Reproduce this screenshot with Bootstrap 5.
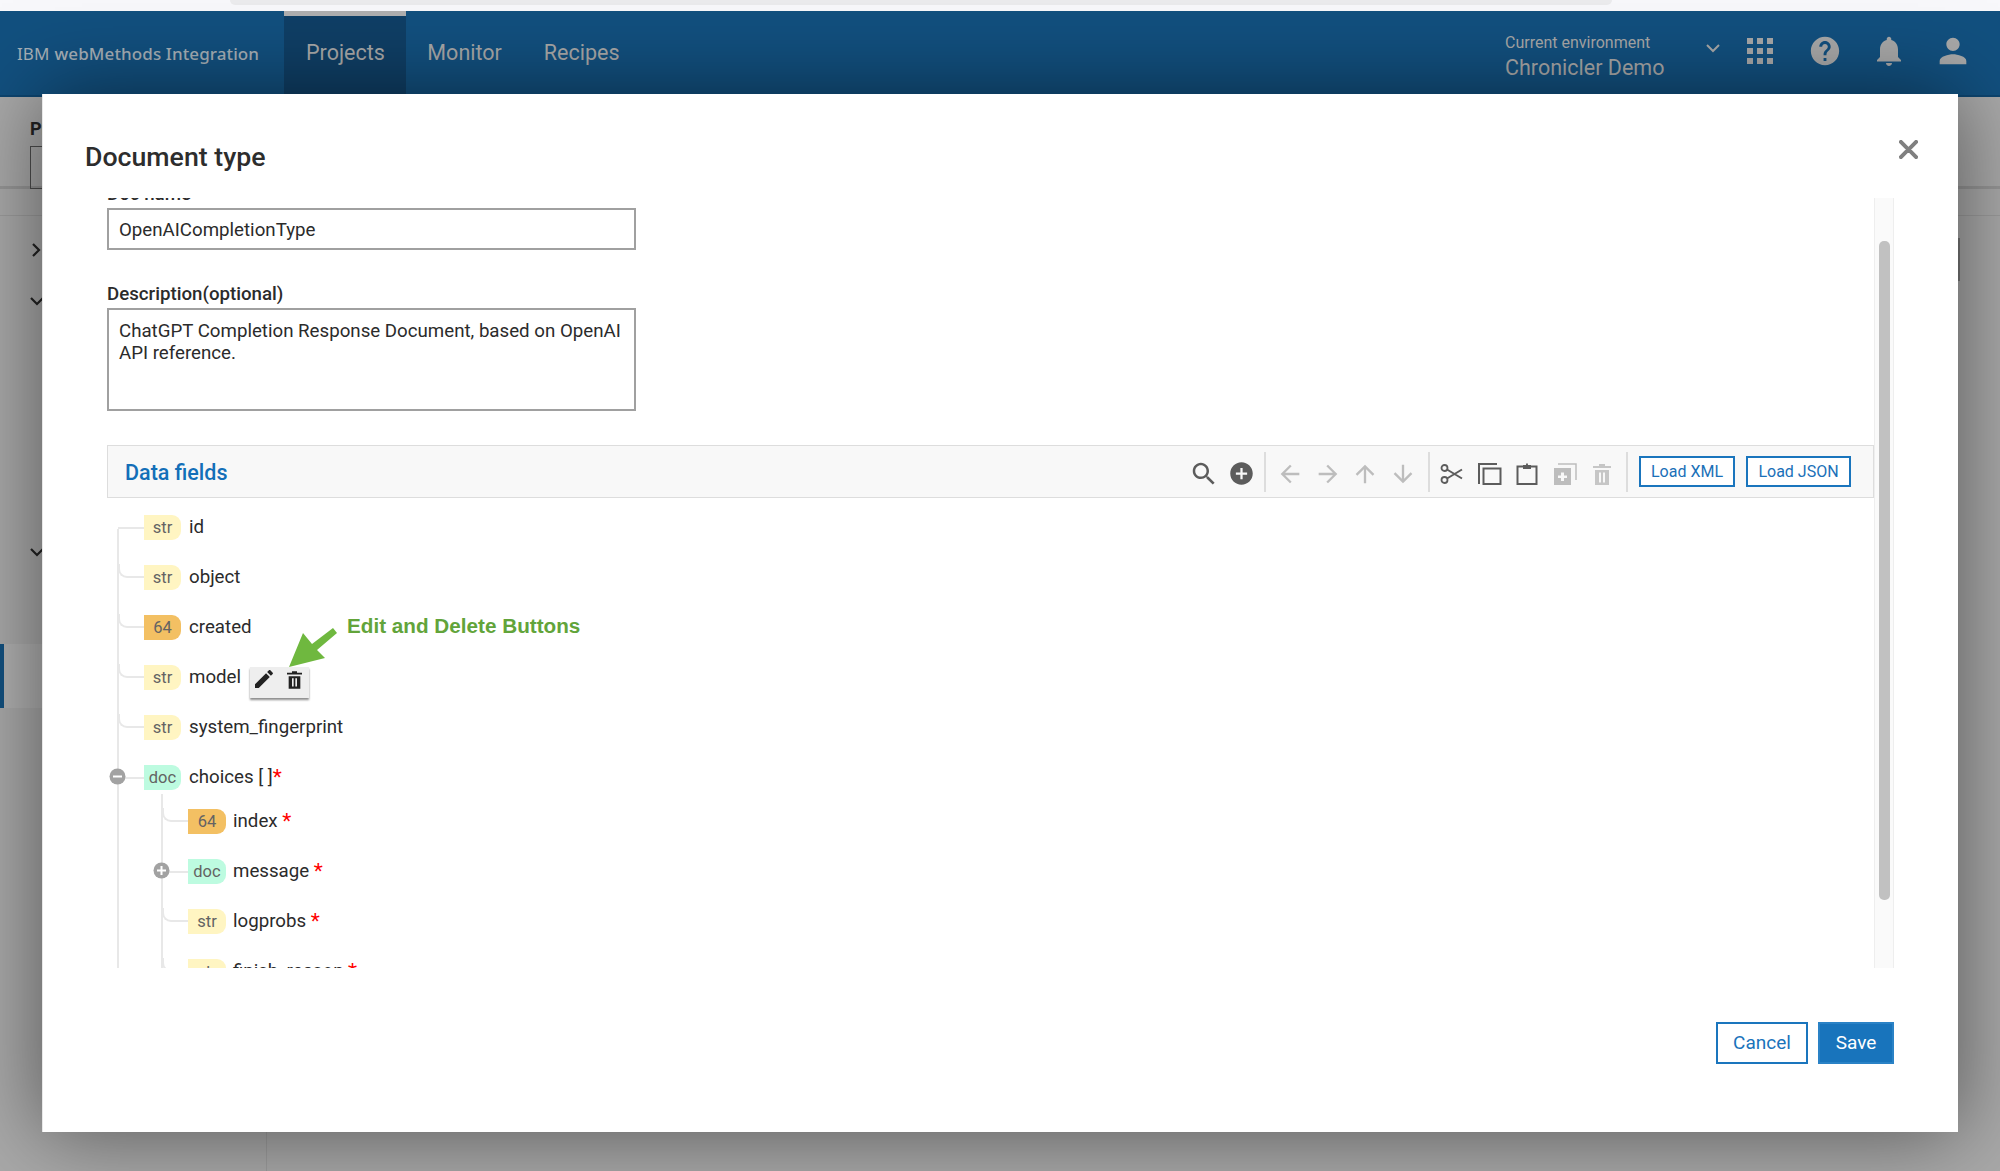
<!DOCTYPE html>
<html lang="en"><head><meta charset="utf-8"><title>Document type</title>
<link rel="stylesheet" href="https://cdn.jsdelivr.net/npm/bootstrap@5.3.0/dist/css/bootstrap.min.css">
<style>
html,body{height:1171px;overflow:hidden}
body{position:relative;background:#a9a9a9;font-family:Roboto,"Liberation Sans",sans-serif;color:#2b2b2b}
.strip{height:11px;background:#f8f8fb;padding-left:230px;padding-right:388px}
.strip-addr{height:5px;background:#ebebed;border-radius:0 0 6px 6px}
.ibm-bar{height:86px;background:#12507f;border-bottom:2px solid #0d4570;color:#a9a9a9;align-items:stretch;flex-wrap:nowrap}
.brand-txt{font-family:"Noto Sans",sans-serif;font-size:17px;color:#a7b0b8;padding-left:17px;padding-top:2px;width:284px;display:flex;align-items:center;white-space:nowrap;letter-spacing:.1px}
.brand-txt b{font-weight:500;margin-left:5px}
.tab-lnk{color:#a9a9a9;font-size:21.5px;padding:0 21px;height:100%;display:flex;align-items:center;border-top:5px solid transparent;padding-bottom:5px;text-decoration:none}
.tab-lnk.on{background:#0f3f66;border-top-color:#b0b0b0;padding-left:22px;padding-right:21.5px}
.env-box{margin-left:auto;display:flex;align-items:center;color:#a9a9a9;padding-right:31px;padding-bottom:2px}
.env-small{font-size:16px;line-height:20px}
.env-big{font-size:21.5px;line-height:29px}
.env-txt{width:201px;margin-top:11px}
.nav-ic{fill:#a9a9a9;display:block}
.pg-head{height:92px;padding:21px 0 0 30px;border-bottom:3px solid #969696;background:#a9a9a9;font-weight:700;font-size:18px;line-height:22px;color:#222}
.pg-inp{width:200px;height:43px;border:1px solid #4d4d4d;margin-top:6px}
.pg-sub{height:27px;border-bottom:1px solid #9b9b9b}
.pg-side{width:267px;height:955px;border-right:1px solid #9c9c9c;padding-top:27px}
.side-chev{display:block;margin-left:30px;stroke:#222;fill:none;stroke-width:2.2}
.side-act{height:64px;margin-top:86px;border-left:4px solid #12507f;background:#b0b0b0}
.edge-mark{position:absolute;left:1958px;top:238px;width:2px;height:43px;background:#777}
.doc-modal{position:absolute;left:42px;top:94px;width:1916px;height:1038px;border:0;border-left:1px solid #e8e8e8;border-radius:0;box-shadow:0 0 80px rgba(0,0,0,.5);background:#fff}
.doc-head{height:104px;padding:0 0 0 42px;border:0;align-items:flex-start}
.doc-title{font-size:26.7px;font-weight:500;line-height:34px;margin-top:46px;color:#2d2d2d}
.doc-x{position:absolute;left:1856px;top:46px;width:19px;height:19px;fill:#808080;stroke:#808080;stroke-width:.9}
.doc-body{height:770px;padding:0;margin:0 64px 0 42px;flex:none;display:flex;overflow:hidden}
.doc-form{flex:1;min-width:0;padding-left:22px}
.doc-track{width:20px;flex:none;background:#fafafa;border:1px solid #eee;border-width:0 1px;padding:43px 3px 0 4px}
.doc-thumb{height:659px;width:11px;background:#c1c1c1;border-radius:5px}
.fld-lbl{font-weight:500;font-size:18.7px;line-height:22px;margin:0 0 3px;display:block;color:#2b2b2b}
.fld-lbl.clip{margin:-15px 0 3px}
.fld-ctl{width:529px;border:2px solid #a0a0a0;border-radius:0;font-size:18.7px;line-height:22px;padding:9px 10px 7px;color:#2b2b2b;height:42px;margin-bottom:33px;background:#fff}
textarea.fld-ctl{height:103px;padding:10px 10px 4px;margin-bottom:34px;resize:none;min-height:0;display:block;overflow:hidden}
.df-bar{height:53px;background:#f8f8f8;border:1px solid #ddd;display:flex;align-items:center;padding:0 22px 0 17px}
.df-title{font-size:21.5px;font-weight:500;color:#136fb8;margin-right:auto;margin-top:4px}
.tb-i{width:37.5px;height:32px;display:flex;align-items:center;justify-content:center;flex:none;margin-top:4px}
.tb-i svg{display:block}
.dk{fill:#5c5c5c}.lt{fill:#bdbdbd}
.tb-sep{width:2px;height:40px;background:#ddd;margin:0 6px;flex:none}
.tb-sep.a{margin-left:3px}
.tb-sep.b{margin-right:4px}
.load-btn{height:31px;border:2px solid #1a75bd;border-radius:0;background:#fff;color:#1a70b8;font-size:16px;line-height:27px;padding:0;width:96px;flex:none}
.load-btn.j{width:105px;margin-left:11px}
.load-sep-gap{margin-left:5px;margin-right:11px}
.tree-ul{list-style:none;margin:0;padding:4px 0 0 37px;position:relative}
.tree-ul::before{content:"";position:absolute;left:10px;top:31px;bottom:0;width:2px;background:#e8e8e8}
.tree-ul.sub{padding:0;margin:-6px 0 0 44px}
.tree-ul.sub::before{left:-27px;top:-2px}
.nd{height:50px;display:flex;align-items:center;position:relative;font-size:18.7px;white-space:nowrap;padding-top:1px}
.nd::before{content:"";position:absolute;left:-26px;top:12px;height:14px;width:26px;border-left:2px solid #e8e8e8;border-bottom:2px solid #e8e8e8;border-bottom-left-radius:9px}
.nd.first::before{top:25px;height:2px;border-left:0;border-radius:0}
.nd.open::before{border-left:0;border-radius:0;top:25px;height:2px}
.ty{width:37px;height:25px;line-height:26px;border-radius:0 9px 9px 0;text-align:center;font-size:16.5px;color:#636363;margin-right:8px;flex:none}
.sub .ty{width:38px;margin-right:7px}
.ty-s{background:#fff5c2}.ty-n{background:#f3c063}.ty-d{background:#bdfbe0}
.req{color:#f00;font-size:21px;line-height:1}
.tog{position:absolute;left:-35px;top:16px;z-index:1;display:block}
.hover-tools{background:#eee;height:31px;width:59px;margin:9px 0 0 9px;box-shadow:0 2px 2px rgba(0,0,0,.45);display:flex;align-items:center;justify-content:space-between;padding:0 7px 6px 4px}
.note-arrow{position:absolute;left:280px;top:620px;z-index:2}
.note-txt{position:absolute;left:347px;top:614px;z-index:2;font-family:"Liberation Sans",sans-serif;font-weight:700;font-size:20.7px;line-height:24px;color:#62a43a;white-space:nowrap}
.doc-foot{border:0;padding:54px 64px 0 0;justify-content:flex-end;gap:10px;align-items:flex-start;flex:1}
.act{height:42px;border-radius:0;margin:0;padding:0;font-size:19px;border:2px solid #1a75bd}
.act-c{width:92px;color:#1a73bb;background:#fff}
.act-s{width:76px;color:#fff;background:#1874bc;border-color:#2a82c6}
</style></head>
<body>
<div class="strip"><div class="strip-addr"></div></div>
<nav class="navbar ibm-bar p-0">
  <div class="brand-txt">IBM<b>webMethods Integration</b></div>
  <a class="tab-lnk on" href="#">Projects</a><a class="tab-lnk" href="#">Monitor</a><a class="tab-lnk" href="#">Recipes</a>
  <div class="env-box">
    <div class="env-txt"><div class="env-small">Current environment</div><div class="env-big">Chronicler Demo</div></div>
    <svg width="14" height="9" viewBox="0 0 14 9" style="margin-right:27px;margin-top:-8px"><path d="M1 1l6 6 6-6" fill="none" stroke="#a9a9a9" stroke-width="2"/></svg>
    <svg class="nav-ic" width="26" height="26" viewBox="0 0 26 26" style="margin-right:35px;margin-top:-2px"><path d="M0 0h6v6H0zM10 0h6v6h-6zM20 0h6v6h-6zM0 10h6v6H0zM10 10h6v6h-6zM20 10h6v6h-6zM0 20h6v6H0zM10 20h6v6h-6zM20 20h6v6h-6z"/></svg>
    <svg class="nav-ic" width="34" height="34" viewBox="0 0 24 24" style="margin-right:29px;margin-top:-2px"><path d="M12 2C6.48 2 2 6.48 2 12s4.48 10 10 10 10-4.48 10-10S17.52 2 12 2zm1 17h-2v-2h2v2zm2.07-7.75l-.9.92C13.45 12.9 13 13.5 13 15h-2v-.5c0-1.1.45-2.1 1.17-2.83l1.24-1.26c.37-.36.59-.86.59-1.41 0-1.1-.9-2-2-2s-2 .9-2 2H8c0-2.21 1.79-4 4-4s4 1.79 4 4c0 .88-.36 1.68-.93 2.25z"/></svg>
    <svg class="nav-ic" width="36" height="36" viewBox="0 0 24 24" style="margin-right:26px;margin-top:-2px"><path d="M12 22c1.1 0 2-.9 2-2h-4c0 1.1.89 2 2 2zm6-6v-5c0-3.07-1.64-5.64-4.5-6.32V4c0-.83-.67-1.5-1.5-1.5s-1.5.67-1.5 1.5v.68C7.63 5.36 6 7.92 6 11v5l-2 2v1h16v-1l-2-2z"/></svg>
    <svg class="nav-ic" width="40" height="40" viewBox="0 0 24 24" style="margin-right:-4px;margin-top:-2px"><path d="M12 12c2.21 0 4-1.79 4-4s-1.79-4-4-4-4 1.79-4 4 1.79 4 4 4zm0 2c-2.67 0-8 1.34-8 4v2h16v-2c0-2.66-5.33-4-8-4z"/></svg>
  </div>
</nav>
<div class="pg-head">Project<div class="pg-inp"></div></div>
<div class="pg-sub"></div>
<div class="pg-side">
  <svg class="side-chev" width="12" height="14" viewBox="0 0 12 14"><path d="M3 1l6 6-6 6"/></svg>
  <svg class="side-chev" style="margin-top:40px" width="14" height="10" viewBox="0 0 14 10"><path d="M1 1l6 6 6-6"/></svg>
  <svg class="side-chev" style="margin-top:241px" width="14" height="10" viewBox="0 0 14 10"><path d="M1 1l6 6 6-6"/></svg>
  <div class="side-act"></div>
</div>
<div class="edge-mark"></div>

<div class="modal-content doc-modal">
  <div class="modal-header doc-head"><h5 class="modal-title doc-title">Document type</h5>
    <svg class="doc-x" viewBox="5 5 14 14"><path d="M19 6.41L17.59 5 12 10.59 6.41 5 5 6.41 10.59 12 5 17.59 6.41 19 12 13.41 17.59 19 19 17.59 13.41 12z"/></svg>
  </div>
  <div class="modal-body doc-body">
    <div class="doc-form">
      <label class="fld-lbl clip">Doc name</label>
      <input class="form-control fld-ctl" value="OpenAICompletionType">
      <label class="fld-lbl">Description(optional)</label>
      <textarea class="form-control fld-ctl" rows="3">ChatGPT Completion Response Document, based on OpenAI API reference.</textarea>
      <div class="df-bar">
        <span class="df-title">Data fields</span>
        <span class="tb-i"><svg class="dk" width="30" height="30" viewBox="0 0 24 24"><path d="M15.5 14h-.79l-.28-.27C15.41 12.59 16 11.11 16 9.5 16 5.91 13.09 3 9.5 3S3 5.91 3 9.5 5.91 16 9.5 16c1.61 0 3.09-.59 4.23-1.57l.27.28v.79l5 4.99L20.49 19l-4.99-5zm-6 0C7.01 14 5 11.99 5 9.5S7.01 5 9.5 5 14 7.01 14 9.5 11.99 14 9.5 14z"/></svg></span>
        <span class="tb-i"><svg class="dk" width="27" height="27" viewBox="0 0 24 24"><path d="M12 2C6.48 2 2 6.48 2 12s4.48 10 10 10 10-4.48 10-10S17.52 2 12 2zm5 11h-4v4h-2v-4H7v-2h4V7h2v4h4v2z"/></svg></span>
        <span class="tb-sep a"></span>
        <span class="tb-i"><svg class="lt" width="28" height="28" viewBox="0 0 24 24"><path d="M20 11H7.83l5.59-5.59L12 4l-8 8 8 8 1.41-1.41L7.83 13H20v-2z"/></svg></span>
        <span class="tb-i"><svg class="lt" width="28" height="28" viewBox="0 0 24 24"><path d="M12 4l-1.41 1.41L16.17 11H4v2h12.17l-5.58 5.59L12 20l8-8z"/></svg></span>
        <span class="tb-i"><svg class="lt" width="28" height="28" viewBox="0 0 24 24"><path d="M4 12l1.41 1.41L11 7.83V20h2V7.83l5.58 5.59L20 12l-8-8-8 8z"/></svg></span>
        <span class="tb-i"><svg class="lt" width="28" height="28" viewBox="0 0 24 24"><path d="M20 12l-1.41-1.41L13 16.17V4h-2v12.17l-5.58-5.59L4 12l8 8 8-8z"/></svg></span>
        <span class="tb-sep b"></span>
        <span class="tb-i"><svg width="24" height="22" viewBox="0 0 24 22"><g fill="none" stroke="#5c5c5c" stroke-width="1.800"><circle cx="4.500" cy="5" r="3"/><circle cx="4.500" cy="17" r="3"/><path d="M7 6.500L22 15.500M7 15.500L22 6.500" stroke-width="2"/></g></svg></span>
        <span class="tb-i"><svg width="24" height="22" viewBox="0 0 24 22"><path d="M1 21V1h18M5.500 5.500h17v15.500h-17z" fill="none" stroke="#5c5c5c" stroke-width="2"/></svg></span>
        <span class="tb-i"><svg width="22" height="22" viewBox="0 0 22 22"><path d="M1.500 3.500h19v17.500h-19z" fill="none" stroke="#5c5c5c" stroke-width="2"/><path d="M7 2h3c0-2.500 2-2.500 2 0h3v4H7z" fill="#5c5c5c"/></svg></span>
        <span class="tb-i"><svg width="24" height="22" viewBox="0 0 24 22"><path d="M5 1h18v16" fill="none" stroke="#bdbdbd" stroke-width="1.500"/><path d="M1 5h17v17H1z" fill="#bdbdbd"/><path d="M8 9.500h3V12.500h3v2.500h-3v3H8v-3H5v-2.500h3z" fill="#f8f8f8"/></svg></span>
        <span class="tb-i"><svg width="18" height="22" viewBox="0 0 18 22"><path d="M0 3h6V1h6v2h6v2H0zM2 7h14v15H2z" fill="#c6c6c6"/><path d="M6 9.500h2v10H6zM10 9.500h2v10h-2z" fill="#f8f8f8"/></svg></span>
        <span class="tb-sep load-sep-gap"></span>
        <button class="btn load-btn" type="button">Load XML</button>
        <button class="btn load-btn j" type="button">Load JSON</button>
      </div>
      <ul class="tree-ul">
        <li><div class="nd first"><span class="ty ty-s">str</span>id</div></li>
        <li><div class="nd"><span class="ty ty-s">str</span>object</div></li>
        <li><div class="nd"><span class="ty ty-n">64</span>created</div></li>
        <li><div class="nd"><span class="ty ty-s">str</span>model
          <span class="hover-tools">
            <svg width="20" height="20" viewBox="2 2 20 20"><path fill="#222" d="M3 17.250V21h3.750L17.810 9.940l-3.750-3.750L3 17.250zM20.710 7.040c.39-.39.39-1.020 0-1.410l-2.340-2.340c-.39-.39-1.020-.39-1.410 0l-1.830 1.830 3.750 3.750 1.830-1.830z"/></svg>
            <svg width="15" height="19" viewBox="0 0 18 22"><path d="M0 3h6V1h6v2h6v2H0zM2 7h14v15H2z" fill="#222"/><path d="M6 9.500h2v10H6zM10 9.500h2v10h-2z" fill="#eee"/></svg>
          </span></div></li>
        <li><div class="nd"><span class="ty ty-s">str</span>system_fingerprint</div></li>
        <li><div class="nd open">
            <svg class="tog" width="17" height="17" viewBox="0 0 17 17"><circle cx="8.500" cy="8.500" r="8" fill="#a2a2a2"/><path d="M4 7.500h9v2H4z" fill="#fff"/></svg>
            <span class="ty ty-d">doc</span>choices [ ]<span class="req">*</span></div>
          <ul class="tree-ul sub">
            <li><div class="nd"><span class="ty ty-n">64</span>index&nbsp;<span class="req">*</span></div></li>
            <li><div class="nd open">
              <svg class="tog" width="17" height="17" viewBox="0 0 17 17"><circle cx="8.500" cy="8.500" r="8" fill="#a2a2a2"/><path d="M4 7.500h3.500V4h2v3.500H13v2H9.500V13h-2V9.500H4z" fill="#fff"/></svg>
              <span class="ty ty-d">doc</span>message&nbsp;<span class="req">*</span></div></li>
            <li><div class="nd"><span class="ty ty-s">str</span>logprobs&nbsp;<span class="req">*</span></div></li>
            <li><div class="nd"><span class="ty ty-s">str</span>finish_reason&nbsp;<span class="req">*</span></div></li>
          </ul>
        </li>
      </ul>
    </div>
    <div class="doc-track"><div class="doc-thumb"></div></div>
  </div>
  <div class="modal-footer doc-foot">
    <button class="btn act act-c" type="button">Cancel</button>
    <button class="btn act act-s" type="button">Save</button>
  </div>
</div>
<svg class="note-arrow" width="60" height="50" viewBox="280 620 60 50"><polygon fill="#6fb83f" points="289,667 303,633 312,644 333,628 337,633 317,650 325,658"/></svg>
<div class="note-txt">Edit and Delete Buttons</div>
<script src="https://cdn.jsdelivr.net/npm/bootstrap@5.3.0/dist/js/bootstrap.bundle.min.js"></script>
</body></html>
